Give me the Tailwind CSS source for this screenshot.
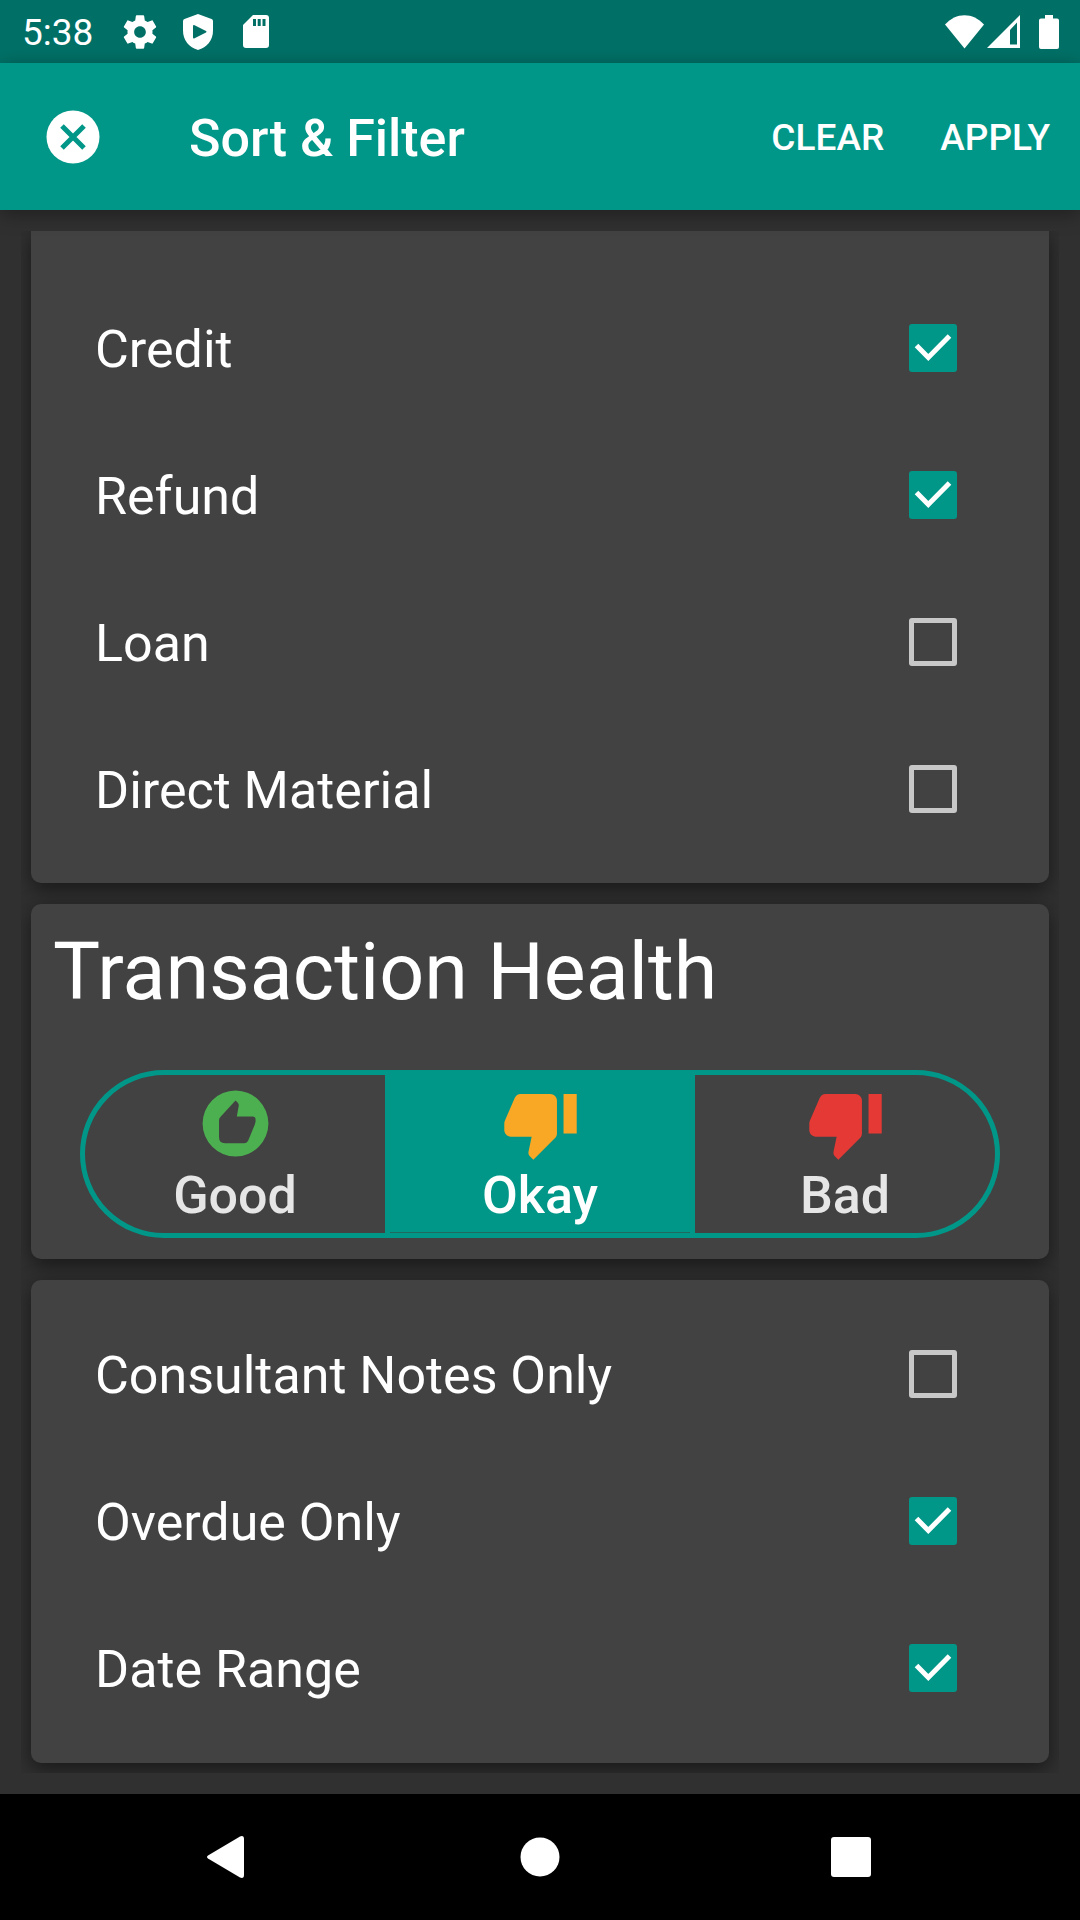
<!DOCTYPE html>
<html lang="en">
<head>
<meta charset="utf-8">
<meta name="viewport" content="width=device-width, initial-scale=1">
<title>Sort &amp; Filter</title>
<script src="https://cdn.jsdelivr.net/npm/@tailwindcss/browser@4"></script>
</head>
<body class="bg-[#303030] font-['Roboto',sans-serif] text-white">
<div class="flex min-h-screen flex-col">

  <!-- System status bar -->
  <div class="flex h-[63px] items-center justify-between bg-[#007066] pr-[21px] pl-[22px]">
    <div class="flex items-center">
      <span class="w-[98px] pt-[3px] text-[37px] leading-[44px]">5:38</span>
      <svg class="size-[40px]" viewBox="0 0 24 24" fill="#fff" aria-hidden="true"><path d="M19.43 12.98c.04-.32.07-.64.07-.98s-.03-.66-.07-.98l2.11-1.65c.19-.15.24-.42.12-.64l-2-3.46c-.12-.22-.39-.3-.61-.22l-2.49 1c-.52-.4-1.08-.73-1.69-.98l-.38-2.65C14.46 2.18 14.25 2 14 2h-4c-.25 0-.46.18-.49.42l-.38 2.65c-.61.25-1.17.59-1.69.98l-2.49-1c-.23-.09-.49 0-.61.22l-2 3.46c-.13.22-.07.49.12.64l2.11 1.65c-.04.32-.07.65-.07.98s.03.66.07.98l-2.11 1.65c-.19.15-.24.42-.12.64l2 3.46c.12.22.39.3.61.22l2.49-1c.52.4 1.08.73 1.69.98l.38 2.65c.03.24.24.42.49.42h4c.25 0 .46-.18.49-.42l.38-2.65c.61-.25 1.17-.59 1.69-.98l2.49 1c.23.09.49 0 .61-.22l2-3.46c.12-.22.07-.49-.12-.64l-2.11-1.65zM12 15.5c-1.93 0-3.5-1.57-3.5-3.5s1.57-3.5 3.5-3.5 3.5 1.57 3.5 3.5-1.57 3.5-3.5 3.5z"/></svg>
      <svg class="ml-[23px] h-[36px] w-[30px]" viewBox="0 0 30 36" aria-hidden="true"><path fill="#fff" d="M15 0 28.500 5Q30 5.600 30 7V16.500C30 26 24 33.500 15 36 6 33.500 0 26 0 16.500V7Q0 5.600 1.500 5Z"/><path fill="#007066" d="M10 12.200Q10 10.400 11.600 11.200L23 17Q24.200 17.800 23 18.600L11.600 24.300Q10 25 10 23.300Z"/></svg>
      <svg class="ml-[30px] h-[33px] w-[26px]" viewBox="0 0 26 33" aria-hidden="true"><path fill="#fff" d="M10 0H23a3 3 0 0 1 3 3V30a3 3 0 0 1-3 3H3a3 3 0 0 1-3-3V10Z"/><path fill="#007066" d="M10 4h3v7h-3zM14.700 4h3v7h-3zM19.500 4h3v7h-3z"/></svg>
    </div>
    <div class="flex items-center">
      <svg class="h-[34px] w-[39px]" viewBox="0 0 39 34" aria-hidden="true"><path fill="#fff" d="M0 9.500C11-3 28-3 39 9.500L19.500 33.500Z"/></svg>
      <svg class="ml-[3px] h-[33px] w-[33px]" viewBox="0 0 33 33" aria-hidden="true"><path fill="#fff" fill-rule="evenodd" d="M33 0V33H0ZM30 7.500 23 15V29.500H30Z"/></svg>
      <svg class="ml-[19px] h-[34px] w-[20px]" viewBox="0 0 20 34" aria-hidden="true"><path fill="#fff" d="M6 0H14V3.500H18a2 2 0 0 1 2 2V32a2 2 0 0 1-2 2H2a2 2 0 0 1-2-2V5.500a2 2 0 0 1 2-2H6Z"/></svg>
    </div>
  </div>

  <!-- App bar -->
  <header class="relative flex h-[147px] items-center bg-[#009788] pr-[30px] pl-[46px] shadow-[0_4px_18px_rgba(0,0,0,0.35)]">
    <button type="button" aria-label="Close" class="size-[54px]">
      <svg class="size-[54px]" viewBox="0 0 54 54" aria-hidden="true"><circle cx="27" cy="27" r="26.500" fill="#fff"/><path d="M16 16 38 38M38 16 16 38" stroke="#009788" stroke-width="5" fill="none"/></svg>
    </button>
    <h1 class="ml-[89px] flex-1 pt-[4px] text-[52px] leading-[62px] font-medium">Sort &amp; Filter</h1>
    <div class="flex gap-[56px] pt-[2px] text-[37px] leading-[44px] font-medium">
      <button type="button">CLEAR</button>
      <button type="button">APPLY</button>
    </div>
  </header>

  <!-- Filter cards -->
  <main class="m-[21px] flex flex-1 flex-col gap-[21px] overflow-hidden px-[10px] pb-[10px] text-[52px] leading-[62px]">
    <section class="rounded-b-[10px] bg-[#424242] pt-[43px] pr-[92px] pb-[21px] pl-[64px] shadow-[0_6px_20px_rgba(0,0,0,0.5)]">
      <label class="flex h-[147px] items-center justify-between"><span class="pt-[5px]">Credit</span>
        <span class="grid size-[48px]"><input type="checkbox" checked class="peer col-start-1 row-start-1 size-[48px] appearance-none rounded-[3px] border-5 border-[#c8c8c8] checked:border-[#009788] checked:bg-[#009788]"><svg class="pointer-events-none invisible col-start-1 row-start-1 size-[48px] peer-checked:visible" viewBox="0 0 48 48" aria-hidden="true"><path d="M7.500 21.500 19.300 33.500 40.500 12" stroke="#fff" stroke-width="5" fill="none"/></svg></span></label>
      <label class="flex h-[147px] items-center justify-between"><span class="pt-[5px]">Refund</span>
        <span class="grid size-[48px]"><input type="checkbox" checked class="peer col-start-1 row-start-1 size-[48px] appearance-none rounded-[3px] border-5 border-[#c8c8c8] checked:border-[#009788] checked:bg-[#009788]"><svg class="pointer-events-none invisible col-start-1 row-start-1 size-[48px] peer-checked:visible" viewBox="0 0 48 48" aria-hidden="true"><path d="M7.500 21.500 19.300 33.500 40.500 12" stroke="#fff" stroke-width="5" fill="none"/></svg></span></label>
      <label class="flex h-[147px] items-center justify-between"><span class="pt-[5px]">Loan</span>
        <span class="grid size-[48px]"><input type="checkbox" class="peer col-start-1 row-start-1 size-[48px] appearance-none rounded-[3px] border-5 border-[#c8c8c8] checked:border-[#009788] checked:bg-[#009788]"><svg class="pointer-events-none invisible col-start-1 row-start-1 size-[48px] peer-checked:visible" viewBox="0 0 48 48" aria-hidden="true"><path d="M7.500 21.500 19.300 33.500 40.500 12" stroke="#fff" stroke-width="5" fill="none"/></svg></span></label>
      <label class="flex h-[147px] items-center justify-between"><span class="pt-[5px]">Direct Material</span>
        <span class="grid size-[48px]"><input type="checkbox" class="peer col-start-1 row-start-1 size-[48px] appearance-none rounded-[3px] border-5 border-[#c8c8c8] checked:border-[#009788] checked:bg-[#009788]"><svg class="pointer-events-none invisible col-start-1 row-start-1 size-[48px] peer-checked:visible" viewBox="0 0 48 48" aria-hidden="true"><path d="M7.500 21.500 19.300 33.500 40.500 12" stroke="#fff" stroke-width="5" fill="none"/></svg></span></label>
    </section>

    <section class="rounded-[10px] bg-[#424242] px-[22px] pt-[22px] pb-[21px] shadow-[0_6px_20px_rgba(0,0,0,0.5)]">
      <h2 id="health" class="text-[79px] leading-[93px]">Transaction Health</h2>
      <div role="radiogroup" aria-labelledby="health" class="mx-[27px] mt-[51px] flex h-[168px] font-medium text-[#e6e6e6]">
        <label class="flex flex-1 flex-col items-center rounded-l-full border-5 border-[#009788] pt-[9px] has-checked:bg-[#009788] has-checked:text-white">
          <input type="radio" name="health" class="sr-only">
          <svg class="size-[79px]" viewBox="0 0 24 24" aria-hidden="true"><path fill="#4caf50" fill-rule="evenodd" d="M12 2a10 10 0 1 0 0 20 10 10 0 1 0 0-20zM12 5.050 12.700 5.700Q13 6.100 13 6.500L12.400 9.900H17.200Q18.100 9.900 18.100 10.800V11.400L17.900 12.200 15.900 17.100Q15.500 18 14.600 18H8.800Q7 18 7 16.200V11Q7 10.400 7.400 10Z"/></svg>
          <span class="pt-[2px]">Good</span>
        </label>
        <label class="-mx-[5px] flex flex-1 flex-col items-center border-5 border-[#009788] pt-[9px] has-checked:bg-[#009788] has-checked:text-white has-checked:shadow-[inset_0_-1px_0_#20695f]">
          <input type="radio" name="health" checked class="sr-only">
          <svg class="size-[79px]" viewBox="0 0 24 24" fill="#f9a825" aria-hidden="true"><path d="M15 3H6c-.83 0-1.540.5-1.840 1.220l-3.020 7.050c-.09.23-.14.47-.14.73v2c0 1.100.9 2 2 2h6.310l-.95 4.570-.03.32c0 .41.17.79.44 1.060L9.830 23l6.590-6.590c.36-.36.58-.86.58-1.410V5c0-1.100-.9-2-2-2zm4 0v12h4V3h-4z"/></svg>
          <span class="pt-[2px]">Okay</span>
        </label>
        <label class="flex flex-1 flex-col items-center rounded-r-full border-5 border-[#009788] pt-[9px] has-checked:bg-[#009788] has-checked:text-white">
          <input type="radio" name="health" class="sr-only">
          <svg class="size-[79px]" viewBox="0 0 24 24" fill="#e53935" aria-hidden="true"><path d="M15 3H6c-.83 0-1.540.5-1.840 1.220l-3.020 7.050c-.09.23-.14.47-.14.73v2c0 1.100.9 2 2 2h6.310l-.95 4.570-.03.32c0 .41.17.79.44 1.060L9.830 23l6.590-6.590c.36-.36.58-.86.58-1.410V5c0-1.100-.9-2-2-2zm4 0v12h4V3h-4z"/></svg>
          <span class="pt-[2px]">Bad</span>
        </label>
      </div>
    </section>

    <section class="rounded-[10px] bg-[#424242] pt-[20px] pr-[92px] pb-[22px] pl-[64px] shadow-[0_6px_20px_rgba(0,0,0,0.5)]">
      <label class="flex h-[147px] items-center justify-between"><span class="pt-[5px]">Consultant Notes Only</span>
        <span class="grid size-[48px]"><input type="checkbox" class="peer col-start-1 row-start-1 size-[48px] appearance-none rounded-[3px] border-5 border-[#c8c8c8] checked:border-[#009788] checked:bg-[#009788]"><svg class="pointer-events-none invisible col-start-1 row-start-1 size-[48px] peer-checked:visible" viewBox="0 0 48 48" aria-hidden="true"><path d="M7.500 21.500 19.300 33.500 40.500 12" stroke="#fff" stroke-width="5" fill="none"/></svg></span></label>
      <label class="flex h-[147px] items-center justify-between"><span class="pt-[5px]">Overdue Only</span>
        <span class="grid size-[48px]"><input type="checkbox" checked class="peer col-start-1 row-start-1 size-[48px] appearance-none rounded-[3px] border-5 border-[#c8c8c8] checked:border-[#009788] checked:bg-[#009788]"><svg class="pointer-events-none invisible col-start-1 row-start-1 size-[48px] peer-checked:visible" viewBox="0 0 48 48" aria-hidden="true"><path d="M7.500 21.500 19.300 33.500 40.500 12" stroke="#fff" stroke-width="5" fill="none"/></svg></span></label>
      <label class="flex h-[147px] items-center justify-between"><span class="pt-[5px]">Date Range</span>
        <span class="grid size-[48px]"><input type="checkbox" checked class="peer col-start-1 row-start-1 size-[48px] appearance-none rounded-[3px] border-5 border-[#c8c8c8] checked:border-[#009788] checked:bg-[#009788]"><svg class="pointer-events-none invisible col-start-1 row-start-1 size-[48px] peer-checked:visible" viewBox="0 0 48 48" aria-hidden="true"><path d="M7.500 21.500 19.300 33.500 40.500 12" stroke="#fff" stroke-width="5" fill="none"/></svg></span></label>
    </section>
  </main>

  <!-- System navigation -->
  <nav class="grid h-[126px] grid-cols-3 bg-black px-[73px]">
    <button type="button" aria-label="Back" class="flex items-center justify-center"><svg class="size-[44px]" viewBox="0 0 44 44" fill="#fff" aria-hidden="true"><path d="M1 20.500 33 1.400Q37 0 37 4V40Q37 44 33 42.600L1 23.500Q-1 22 1 20.500Z"/></svg></button>
    <button type="button" aria-label="Home" class="flex items-center justify-center"><svg class="size-[40px]" viewBox="0 0 40 40" fill="#fff" aria-hidden="true"><circle cx="20" cy="20" r="19.500"/></svg></button>
    <button type="button" aria-label="Overview" class="flex items-center justify-center"><svg class="size-[40px]" viewBox="0 0 40 40" fill="#fff" aria-hidden="true"><rect width="40" height="40" rx="3"/></svg></button>
  </nav>
</div>
</body>
</html>
